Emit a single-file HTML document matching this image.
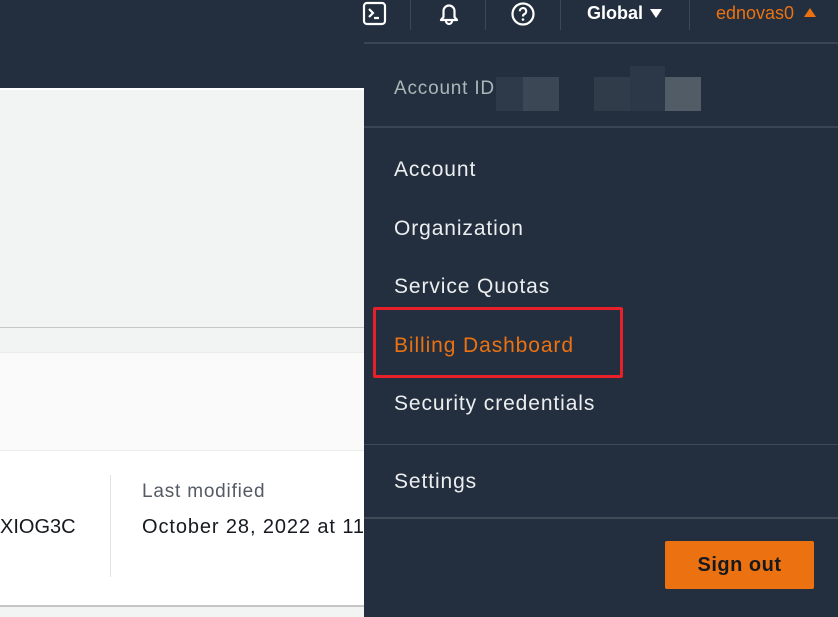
<!DOCTYPE html>
<html><head><meta charset="utf-8"><style>
*{margin:0;padding:0;box-sizing:border-box}
body{width:838px;height:617px;overflow:hidden;position:relative;font-family:"Liberation Sans",sans-serif;background:#f2f3f3}
.abs{position:absolute}
.t{position:absolute;font-size:21px;color:#eceef0;white-space:nowrap;letter-spacing:0.9px}
</style></head><body>
<div class="abs" style="left:0;top:0;width:838px;height:88px;background:#232f3e"></div>
<div class="abs" style="left:0;top:88px;width:364px;height:2px;background:#fff"></div>
<div class="abs" style="left:0;top:90px;width:364px;height:237px;background:#f2f3f3"></div>
<div class="abs" style="left:0;top:327px;width:364px;height:1px;background:#c6c6c6"></div>
<div class="abs" style="left:0;top:352px;width:364px;height:98px;background:#fafafa;border-top:1px solid #eaeded"></div>
<div class="abs" style="left:0;top:450px;width:364px;height:155px;background:#fff;border-top:1px solid #eaeded"></div>
<div class="abs" style="left:0;top:605px;width:364px;height:2px;background:#c6c6c6"></div>
<div class="abs" style="left:110px;top:475px;width:1px;height:102px;background:#e3e3e3"></div>
<div class="abs" style="left:0;top:0;width:364px;height:617px;overflow:hidden">
<div class="t" style="left:0;top:516px;font-size:20px;color:#16191f;letter-spacing:0">XIOG3C</div>
<div class="t" style="left:142px;top:481px;font-size:19px;color:#545b64;letter-spacing:0.8px">Last modified</div>
<div class="t" style="left:142px;top:516px;font-size:20px;color:#16191f">October 28, 2022 at 11</div>
</div>

<svg class="abs" style="left:362px;top:1px" width="26" height="26" viewBox="0 0 26 26"><rect x="2" y="2" width="21" height="21" rx="3" fill="none" stroke="#fff" stroke-width="2.2"/><path d="M7 8l4 4-4 4M12 17h5" fill="none" stroke="#fff" stroke-width="2.2"/></svg>
<div class="abs" style="left:410px;top:0;width:1px;height:30px;background:#414750"></div>
<svg class="abs" style="left:436px;top:1px" width="26" height="26" viewBox="0 0 26 26"><path d="M5 19h16l-2.5-3V10a5.5 5.5 0 0 0-11 0v6z" fill="none" stroke="#fff" stroke-width="2.2" stroke-linejoin="round"/><path d="M10 20a3 3 0 0 0 6 0" fill="none" stroke="#fff" stroke-width="2.2"/></svg>
<div class="abs" style="left:485px;top:0;width:1px;height:30px;background:#414750"></div>
<svg class="abs" style="left:510px;top:1px" width="26" height="26" viewBox="0 0 26 26"><circle cx="13" cy="13" r="10.5" fill="none" stroke="#fff" stroke-width="2.2"/><path d="M9.8 10.2a3.2 3.2 0 1 1 4.4 3c-1 .5-1.2 1-1.2 2.3" fill="none" stroke="#fff" stroke-width="2.2"/><circle cx="13" cy="18.5" r="1.3" fill="#fff"/></svg>
<div class="abs" style="left:560px;top:0;width:1px;height:30px;background:#414750"></div>
<div class="t" style="left:587px;top:3px;font-size:18px;font-weight:bold;color:#fff;letter-spacing:0">Global</div>
<svg class="abs" style="left:649px;top:8px" width="14" height="11"><path d="M1 1h12L7 10z" fill="#fff"/></svg>
<div class="abs" style="left:689px;top:0;width:1px;height:30px;background:#414750"></div>
<div class="t" style="left:716px;top:3px;font-size:18px;color:#ec7211;letter-spacing:0">ednovas0</div>
<svg class="abs" style="left:803px;top:7px" width="14" height="11"><path d="M1 10h12L7 1z" fill="#ec7211"/></svg>

<div class="abs" style="left:364px;top:42px;width:474px;height:575px;background:#232f3e;border-top:2px solid #3b4453"></div>
<div class="t" style="left:394px;top:78px;font-size:19px;color:#aab7b8;letter-spacing:0.8px">Account ID</div>
<div class="abs" style="left:496px;top:77px;width:27px;height:34px;background:#2e3a49"></div>
<div class="abs" style="left:523px;top:77px;width:36px;height:34px;background:#3c4756"></div>
<div class="abs" style="left:594px;top:77px;width:36px;height:34px;background:#313c4b"></div>
<div class="abs" style="left:630px;top:66px;width:35px;height:45px;background:#2c3847"></div>
<div class="abs" style="left:665px;top:77px;width:36px;height:34px;background:#525c67"></div>
<div class="abs" style="left:364px;top:126px;width:474px;height:2px;background:#3b4453"></div>
<div class="t" style="left:394px;top:158px">Account</div>
<div class="t" style="left:394px;top:217px">Organization</div>
<div class="t" style="left:394px;top:275px">Service Quotas</div>
<div class="abs" style="left:373px;top:307px;width:250px;height:71px;border:3px solid #e8202a;border-radius:2px"></div>
<div class="t" style="left:394px;top:334px;color:#ec7211">Billing Dashboard</div>
<div class="t" style="left:394px;top:392px">Security credentials</div>
<div class="abs" style="left:364px;top:444px;width:474px;height:1px;background:#414a57"></div>
<div class="t" style="left:394px;top:470px">Settings</div>
<div class="abs" style="left:364px;top:517px;width:474px;height:2px;background:#414a57"></div>
<div class="abs" style="left:665px;top:541px;width:149px;height:48px;background:#ec7211;border-radius:2px;color:#16191f;font-weight:bold;font-size:20px;text-align:center;line-height:48px;letter-spacing:0.5px">Sign out</div>
</body></html>
